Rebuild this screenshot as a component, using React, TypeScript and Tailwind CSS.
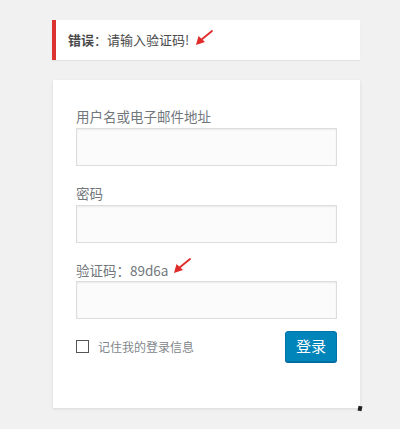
import React from 'react';

const Arrow: React.FC<{ className?: string }> = ({ className }) => (
  <svg className={className} width="18" height="16" viewBox="0 0 18 16" fill="none">
    <path d="M17 1 L6 10" stroke="#e02b2b" strokeWidth="1.8" strokeLinecap="round" />
    <path d="M1 15 L3.5 6 L10 12 Z" fill="#e02b2b" />
  </svg>
);

const Field: React.FC<{ label: React.ReactNode; type?: string }> = ({ label, type = 'text' }) => (
  <div className="flex flex-col">
    <label className="text-[13.5px] leading-[20px] text-[#72777c]">{label}</label>
    <input
      type={type}
      className="mt-[2px] h-[38px] w-full border border-[#dddddd] bg-[#fbfbfb] px-2 outline-none shadow-[inset_0_1px_2px_rgba(0,0,0,0.07)]"
    />
  </div>
);

const App: React.FC = () => {
  return (
    <div
      className="min-h-[429px] w-[400px] bg-[#f1f1f1] pt-[20px]"
      style={{ fontFamily: '"Noto Sans CJK SC", "Noto Sans", sans-serif' }}
    >
      <div className="ml-[52px] w-[308px]">
        <div className="flex h-[40px] items-center border-l-[4px] border-[#dc3232] bg-white pl-[12px] shadow-[0_1px_1px_rgba(0,0,0,0.06)]">
          <span className="text-[13px] text-[#4a4a4a]">
            <strong className="font-bold">错误</strong>：请输入验证码!
          </span>
          <Arrow className="ml-[6px] -mt-[4px]" />
        </div>

        <div className="relative mt-[20px] ml-[1px] h-[328px] bg-white px-[23px] pt-[26px] shadow-[0_1px_3px_rgba(0,0,0,0.1)]">
          <div className="flex flex-col gap-[17px]">
            <Field label="用户名或电子邮件地址" />
            <Field label="密码" type="password" />
            <div className="flex flex-col">
              <div className="flex items-center">
                <label className="text-[13.5px] leading-[20px] text-[#72777c]">验证码：89d6a</label>
                <Arrow className="ml-[5px] -mt-[8px]" />
              </div>
              <input
                type="text"
                className="mt-[1px] h-[38px] w-full border border-[#dddddd] bg-[#fbfbfb] px-2 outline-none shadow-[inset_0_1px_2px_rgba(0,0,0,0.07)]"
              />
            </div>
          </div>

          <div className="mt-[12px] flex items-center justify-between">
            <label className="flex items-center text-[12px] text-[#82878c]">
              <span className="mr-[9px] h-[13px] w-[13px] border border-[#555]" />
              记住我的登录信息
            </label>
            <button className="h-[31px] w-[52px] rounded-[3px] border border-[#0073aa] bg-[#0085ba] text-[15px] text-white shadow-[0_1px_0_#006799]">
              登录
            </button>
          </div>

          <span className="absolute -right-[2px] -bottom-[3px] h-[5px] w-[4px] rotate-12 bg-[#222]" />
        </div>
      </div>
    </div>
  );
};

export default App;
